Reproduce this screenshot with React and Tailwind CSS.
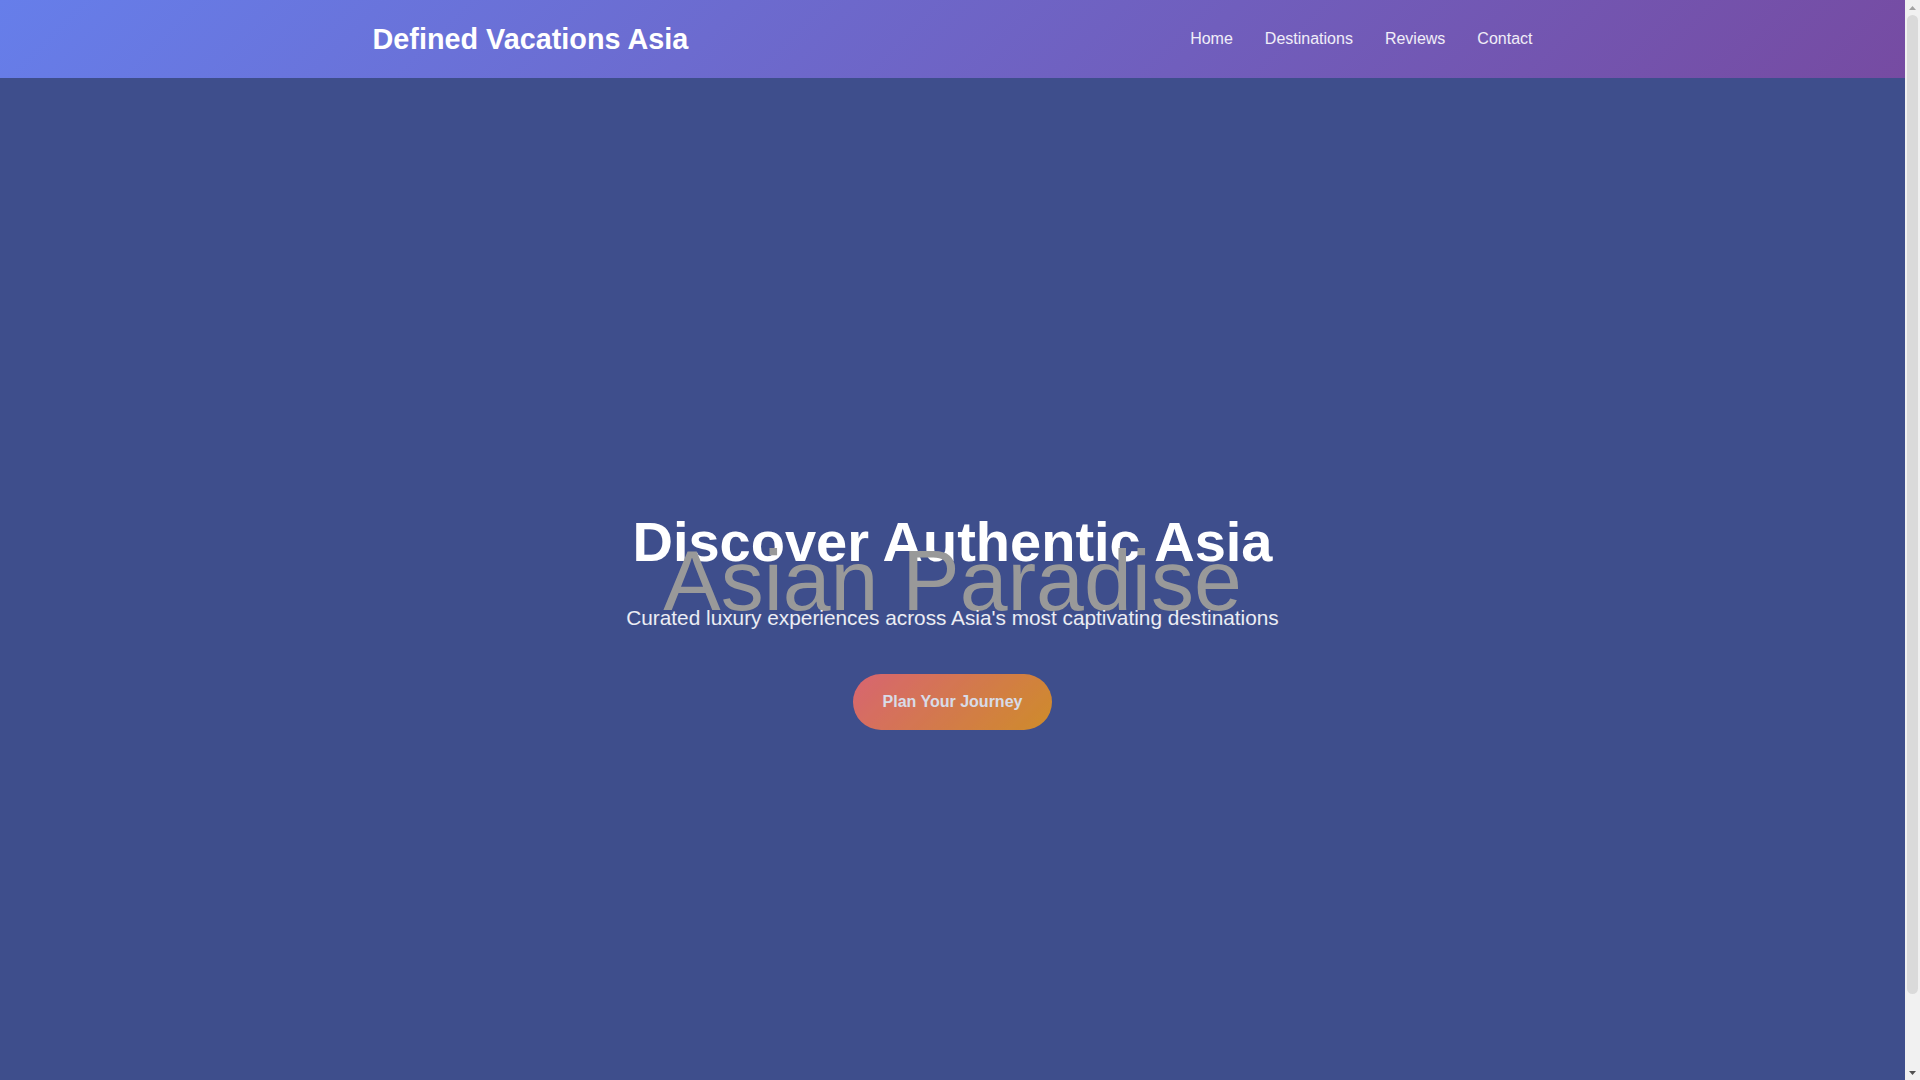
import React from 'react';

const navLinks = ['Home', 'Destinations', 'Reviews', 'Contact'];

const Header = () => (
  <header className="bg-[linear-gradient(135deg,#667eea_0%,#764ba2_100%)] text-white">
    <div className="mx-auto flex h-[78px] max-w-[1200px] items-center justify-between px-5">
      <div className="text-[28.8px] font-bold leading-none">Defined Vacations Asia</div>
      <nav className="flex gap-8">
        {navLinks.map((link) => (
          <a key={link} href="#" className="text-base text-white/90">
            {link}
          </a>
        ))}
      </nav>
    </div>
  </header>
);

const Hero = () => (
  <section className="flex h-screen flex-col items-center justify-center bg-[#3e4e8c] pt-[8px] text-center">
    <h1 className="text-[56px] font-bold leading-[56px] text-white">Discover Authentic Asia</h1>
    <div className="mt-[-33px] text-[86px] leading-[86px] text-[#999999]">Asian Paradise</div>
    <p className="mt-[-15px] text-[20.8px] leading-[20.8px] text-white/90">
      Curated luxury experiences across Asia's most captivating destinations
    </p>
    <button className="mt-[45px] rounded-full bg-[linear-gradient(135deg,#ff6b6b,#f39c12)] px-[30px] py-[19px] text-base font-bold leading-[normal] text-white opacity-80">
      Plan Your Journey
    </button>
  </section>
);

// browser scrollbar as it shows in the screenshot
const Scrollbar = () => (
  <div className="flex w-[15px] shrink-0 flex-col bg-[#f1f1f1]">
    <div className="flex h-[15px] items-center justify-center">
      <svg width="7" height="4" viewBox="0 0 7 4"><path d="M3.5 0L7 4H0z" fill="#a3a3a3" /></svg>
    </div>
    <div className="mx-[2px] h-[979px] rounded-full bg-[#dadada]" />
    <div className="flex-1" />
    <div className="flex h-[15px] items-center justify-center">
      <svg width="7" height="4" viewBox="0 0 7 4"><path d="M0 0h7L3.5 4z" fill="#505050" /></svg>
    </div>
  </div>
);

const App = () => {
  return (
    <div className="flex h-screen overflow-hidden font-['Liberation_Sans',Arial,sans-serif]">
      <div className="min-w-0 flex-1">
        <Header />
        <Hero />
      </div>
      <Scrollbar />
    </div>
  );
};

export default App;
